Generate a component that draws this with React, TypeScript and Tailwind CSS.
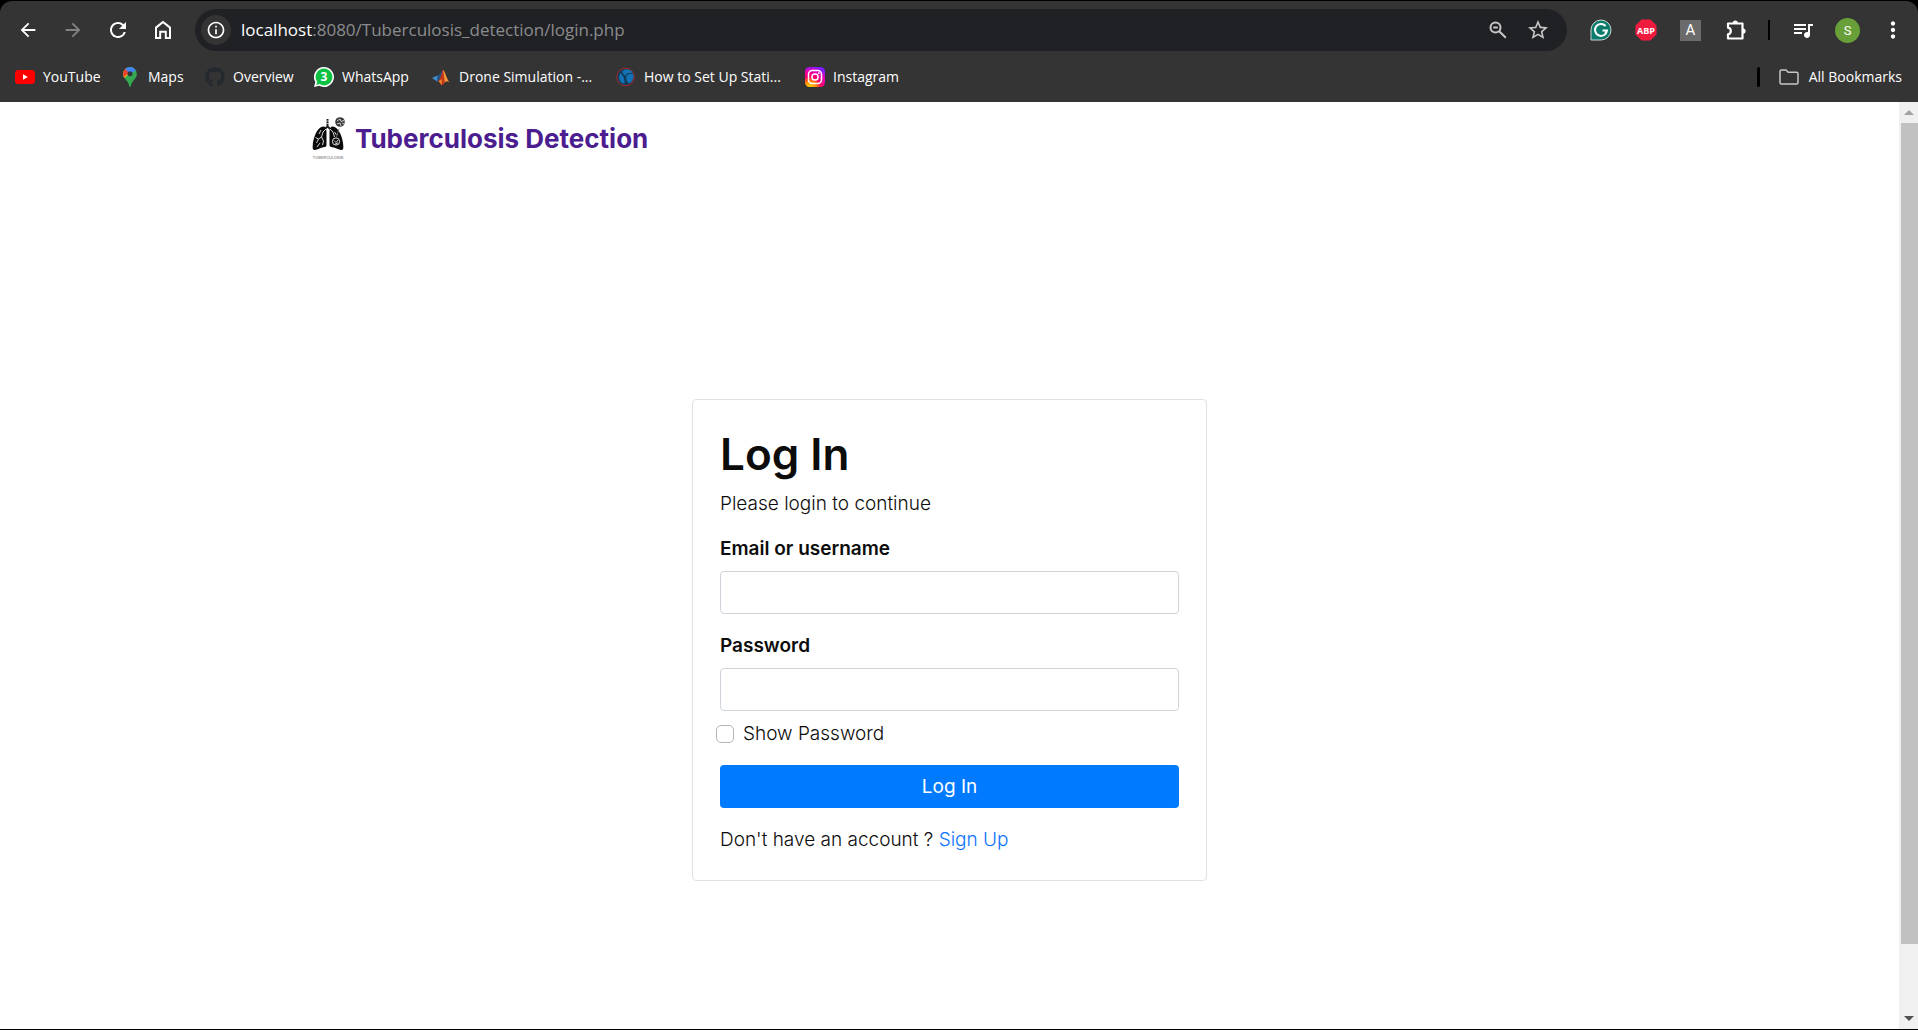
import type { ReactNode } from "react";
import { useState } from "react";
import {
  MdArrowBack,
  MdArrowForward,
  MdMoreVert,
  MdOutlineInfo,
  MdQueueMusic,
  MdRefresh,
  MdStarOutline,
} from "react-icons/md";
import { FaGithub } from "react-icons/fa";

function HomeIcon() {
  return (
    <svg viewBox="0 0 20 20" className="size-5" fill="none" stroke="currentColor" strokeWidth="2" aria-hidden="true">
      <path d="M3 18V7.6L10 2l7 5.600V18h-4.200v-6.200H7.200V18z" />
    </svg>
  );
}

function ZoomOutIcon() {
  return (
    <svg viewBox="0 0 20 20" className="size-5" fill="none" stroke="currentColor" strokeWidth="2" aria-hidden="true">
      <circle cx="7.500" cy="7.500" r="5" />
      <path d="M5.200 7.500h4.600M11.200 11.200l6.600 6.600" />
    </svg>
  );
}

function PuzzleIcon() {
  return (
    <svg viewBox="0 0 24 24" className="size-6" aria-hidden="true">
      <path
        d="M4 5.500h14.500v15H4v-4.200c1.700-.2 2.800-1.500 2.800-3.300S5.700 9.900 4 9.700z"
        fill="none"
        stroke="currentColor"
        strokeWidth="2.200"
        strokeLinejoin="round"
      />
      <path d="M8.700 5.200a2.600 2.600 0 0 1 5.200 0zM19 10.400a2.600 2.600 0 0 1 0 5.200z" fill="currentColor" />
    </svg>
  );
}

function GrammarlyIcon() {
  return (
    <svg viewBox="0 0 22 22" className="size-[22px]" aria-hidden="true">
      <path d="M1 21V11a10 10 0 1 1 10 10z" fill="#0b7b6b" stroke="#c9d6d3" strokeWidth="1" />
      <path d="M15.600 7A6 6 0 1 0 17 11.500h-4.500M16.900 11.500l-1.600 3.200" fill="none" stroke="#fff" strokeWidth="2" />
    </svg>
  );
}

function AdblockIcon() {
  return (
    <svg viewBox="0 0 22 22" className="size-[22px]" aria-hidden="true">
      <path d="M6.500.5h9l6 6v9l-6 6h-9l-6-6v-9z" fill="#f01c3f" />
      <text x="11" y="14.500" textAnchor="middle" fontSize="9" fontWeight="700" fill="#fff" fontFamily="Open Sans, sans-serif">
        ABP
      </text>
    </svg>
  );
}

function FolderIcon() {
  return (
    <svg viewBox="0 0 20 20" className="size-5 text-[#c7c7c7]" fill="none" stroke="currentColor" strokeWidth="1.500" strokeLinejoin="round" aria-hidden="true">
      <path d="M1 4.500q0-1.500 1.500-1.500H7l2.200 2.300h8.300q1.500 0 1.500 1.500v8.700q0 1.500-1.500 1.500h-15Q1 17 1 15.500z" />
    </svg>
  );
}

function YouTubeIcon() {
  return (
    <svg viewBox="0 0 20 20" className="size-5" aria-hidden="true">
      <rect y="3" width="20" height="14" rx="3.500" fill="#f00" />
      <path d="M8 7.200v5.600l4.800-2.800z" fill="#fff" />
    </svg>
  );
}

function MapsIcon() {
  return (
    <svg viewBox="0 0 20 20" className="size-5" aria-hidden="true">
      <clipPath id="pin">
        <path d="M10 0a6.800 6.800 0 0 0-6.800 6.900c0 2 .8 3.500 2 5 1.700 2 3.400 3.800 4 7 .2 1.400 1.400 1.400 1.600 0 .6-3.200 2.300-5 4-7 1.200-1.500 2-3 2-5A6.800 6.800 0 0 0 10 0z" />
      </clipPath>
      <g clipPath="url(#pin)">
        <rect width="20" height="20" fill="#34a853" />
        <path d="M0 15L10 6l4-5H0z" fill="#fbbc04" />
        <path d="M0 11l4-1 6-5-5-4H0z" fill="#ea4335" />
        <path d="M5 1.500L10 7l5.800-3.500L14 0H6z" fill="#4285f4" />
        <path d="M4 15l9.500-11L17 2v6L7 19z" fill="none" />
      </g>
      <circle cx="10" cy="6.800" r="2.500" fill="#343434" />
    </svg>
  );
}

function WhatsAppIcon() {
  return (
    <svg viewBox="0 0 20 20" className="size-5" aria-hidden="true">
      <path d="M10 0a10 10 0 1 1-4.800 18.800L0 20l1.300-5A10 10 0 0 1 10 0z" fill="#fff" />
      <path d="M10 1.600a8.400 8.400 0 1 1-4.500 15.500l-3.200.8.900-3A8.400 8.400 0 0 1 10 1.600z" fill="#0fc143" />
      <text x="10" y="14.300" textAnchor="middle" fontSize="12" fontWeight="700" fill="#fff" fontFamily="Open Sans, sans-serif">
        3
      </text>
    </svg>
  );
}

function MatlabIcon() {
  return (
    <svg viewBox="0 0 20 20" className="size-5" aria-hidden="true">
      <path d="M1 11l5.500-2.500 3 3.800L6 14.500z" fill="#3d8fd1" />
      <path d="M6.500 8.500C9 8 10 4 12 2.500L10.500 12 7.500 14 6 14.500z" fill="#26507f" />
      <path d="M12 2.500c2 1.500 3.500 9 6.500 13-2-1.800-3.500-1.500-5 .5-1 1.400-2 2-3 2.500-.8-2.200-2-3.600-3.500-4.200C9.500 12.500 10.500 6 12 2.500z" fill="#c1361b" />
      <path d="M12.200 2.800c1.800 2 3.300 9 6.300 12.700-2-1.800-3.300-1.600-4.700 0C13.500 11 12.500 7 12.200 2.800z" fill="#f39a3c" />
      <path d="M10.500 12c.6 2 .5 4.500 0 6.500-.8-2.200-2-3.600-3.500-4.200 1.500-.4 2.600-1.200 3.500-2.300z" fill="#e8842c" />
    </svg>
  );
}

function GlobeIcon() {
  return (
    <svg viewBox="0 0 20 20" className="size-5" aria-hidden="true">
      <circle cx="9.500" cy="10" r="8.700" fill="#123a52" stroke="#b3262b" strokeWidth="1" />
      <path d="M6 4.500C9 1.500 14.500 2 17 5.500c-1.500 0-2.500 1-4 .8-2-.4-3.200.8-3.700 3C8.500 8 7 6.500 6 4.500z" fill="#1272b5" />
      <path d="M10.500 9c1-2 4-2.500 7-1.500.5 3.500-1 7-4 8.800-2.500-1-4-4-3-7.300z" fill="#1272b5" />
      <path d="M4.500 6C7 8 8.500 11 8.600 16.800 3.500 16 1.500 10.500 4.500 6z" fill="#1272b5" />
    </svg>
  );
}

function InstagramIcon() {
  return (
    <svg viewBox="0 0 20 20" className="size-5" aria-hidden="true">
      <defs>
        <radialGradient id="warm" cx="25%" cy="105%" r="110%">
          <stop offset="0" stopColor="#ffdd00" />
          <stop offset=".3" stopColor="#ff8a00" />
          <stop offset=".5" stopColor="#ff0069" />
          <stop offset=".8" stopColor="#e600b8" />
          <stop offset="1" stopColor="#7a1cff" />
        </radialGradient>
      </defs>
      <rect width="20" height="20" rx="4.500" fill="url(#warm)" />
      <rect x="3.500" y="3.500" width="13" height="13" rx="3.800" fill="none" stroke="#fff" strokeWidth="1.500" />
      <circle cx="10" cy="10" r="3.100" fill="none" stroke="#fff" strokeWidth="1.500" />
      <circle cx="13.800" cy="6.200" r=".9" fill="#fff" />
    </svg>
  );
}

function LungsLogo() {
  return (
    <svg viewBox="0 0 41 45" className="h-[45px] w-[41px]" aria-hidden="true">
      <path d="M19.500 3v8M19.500 10.500l-4 3.500M19.500 10.500l4 3.500" stroke="#222" strokeWidth="2" fill="none" />
      <path d="M17.500 5h4M17.500 7.500h4" stroke="#fff" strokeWidth=".6" />
      <path d="M15.500 10.500c2 0 3 2.500 3 6V29c0 2-1.500 2-3 2.200-3 .5-5 2-8.300 2.800-2.200.4-2.700-1-2.500-4 .4-8 4.500-19.500 10.800-19.500z" fill="#0b0b0b" />
      <path d="M24.500 10.500c-2 0-3 2.500-3 6V29c0 2 1.500 2 3 2.200 3 .5 5 2 8.300 2.800 2.200.4 2.700-1 2.500-4-.4-8-4.500-19.500-10.800-19.500z" fill="#0b0b0b" />
      <path d="M18 13l-3 3-1.500 5-3 2-2 4M13.500 21l2 4-1 4M10.500 23l-3-1.500M12 27l-3 4M11 18l2-4M22 13l3 3 1.500 5M26.500 16l2 3" stroke="#e8e8e8" strokeWidth=".9" fill="none" />
      <circle cx="28" cy="25.500" r="3.600" fill="none" stroke="#ddd" strokeWidth="1" />
      <path d="M26 24.500l2 2 2-2.500M27 28l3-1" stroke="#ddd" strokeWidth=".9" fill="none" />
      <path d="M28.500 21.500l2.500-9" stroke="#888" strokeWidth=".8" />
      <circle cx="32" cy="6" r="4.800" fill="#3a3a3a" />
      <path d="M29 5l3-2 1 2.500 3-1M29 8l3-1 1 3M34 7l2 1" stroke="#ddd" strokeWidth=".9" fill="none" />
      <text x="20" y="42.500" textAnchor="middle" fontSize="4" fill="#a3a3a3" fontFamily="Inter, sans-serif">
        TUBERCULOSIS
      </text>
    </svg>
  );
}

function ToolButton({ label, children, className = "" }: { label: string; children: ReactNode; className?: string }) {
  return (
    <button type="button" aria-label={label} className={`flex h-[42px] w-[45px] items-center justify-center ${className}`}>
      {children}
    </button>
  );
}

const bookmarks = [
  { label: "YouTube", icon: <YouTubeIcon />, width: "w-[105px]" },
  { label: "Maps", icon: <MapsIcon />, width: "w-[85px]" },
  { label: "Overview", icon: <FaGithub className="size-5 text-[#24292f]" />, width: "w-[109px]" },
  { label: "WhatsApp", icon: <WhatsAppIcon />, width: "w-[117px]" },
  { label: "Drone Simulation -...", icon: <MatlabIcon />, width: "w-[185px]" },
  { label: "How to Set Up Stati...", icon: <GlobeIcon />, width: "w-[189px]" },
  { label: "Instagram", icon: <InstagramIcon />, width: "w-[115px]" },
];

function BrowserChrome() {
  return (
    <header className="rounded-t-xl bg-[#343434] pt-2 font-['Open_Sans',sans-serif] text-white">
      <div className="flex items-center pr-[3px] pl-[5px]">
        <ToolButton label="Back">
          <MdArrowBack className="size-[22px]" />
        </ToolButton>
        <ToolButton label="Forward" className="text-[#838383]">
          <MdArrowForward className="size-[22px]" />
        </ToolButton>
        <ToolButton label="Reload">
          <MdRefresh className="size-6" />
        </ToolButton>
        <ToolButton label="Home">
          <HomeIcon />
        </ToolButton>
        <div className="ml-[10px] flex h-[42px] flex-1 items-center rounded-full bg-[#202124] pr-[9px] pl-[6px]">
          <button type="button" aria-label="View site information" className="flex size-[30px] items-center justify-center rounded-full bg-[#343434]">
            <MdOutlineInfo className="size-5" />
          </button>
          <p className="ml-[10px] flex-1 text-[17px] text-[#8b8c8e]">
            <span className="text-white">localhost</span>:8080/Tuberculosis_detection/login.php
          </p>
          <button type="button" aria-label="Zoom" className="flex size-10 items-center justify-center text-[#c7c7c7]">
            <ZoomOutIcon />
          </button>
          <button type="button" aria-label="Bookmark this tab" className="flex size-10 items-center justify-center text-[#c7c7c7]">
            <MdStarOutline className="size-6" />
          </button>
        </div>
        <div className="ml-[11px] flex items-center">
          <ToolButton label="Grammarly">
            <GrammarlyIcon />
          </ToolButton>
          <ToolButton label="Adblock Plus">
            <AdblockIcon />
          </ToolButton>
          <ToolButton label="Extension A">
            <span className="flex size-[21px] items-center justify-center bg-[#6b6b6b] font-['Roboto',sans-serif] text-[15px] leading-none">
              A
            </span>
          </ToolButton>
          <ToolButton label="Extensions">
            <PuzzleIcon />
          </ToolButton>
          <span className="mx-[10px] h-5 w-[2px] bg-black" />
          <ToolButton label="Media controls">
            <MdQueueMusic className="size-6" />
          </ToolButton>
          <ToolButton label="Profile">
            <span className="flex size-[25px] items-center justify-center rounded-full bg-[#689f38] font-['Roboto',sans-serif] text-[13px] leading-none">
              S
            </span>
          </ToolButton>
          <ToolButton label="Menu">
            <MdMoreVert className="size-[26px]" />
          </ToolButton>
        </div>
      </div>
      <nav aria-label="Bookmarks" className="flex h-[51px] items-center pr-4 pl-[15px] text-sm">
        {bookmarks.map((bookmark) => (
          <a key={bookmark.label} href="#" className={`flex shrink-0 items-center gap-2 whitespace-nowrap ${bookmark.width}`}>
            {bookmark.icon}
            {bookmark.label}
          </a>
        ))}
        <span className="ml-auto h-5 w-[3px] rounded-full bg-black" />
        <button type="button" className="ml-[19px] flex items-center gap-[10px]">
          <FolderIcon />
          All Bookmarks
        </button>
      </nav>
    </header>
  );
}

function Scrollbar() {
  return (
    <div className="flex w-[19px] shrink-0 flex-col bg-[#f0f0f0]">
      <button type="button" aria-label="Scroll up" className="flex h-[21px] items-center justify-center">
        <svg viewBox="0 0 10 5" className="h-[5px] w-[10px]" aria-hidden="true">
          <path d="M0 5L5 0l5 5z" fill="#a3a3a3" />
        </svg>
      </button>
      <div className="ml-[2px] flex-[821] bg-[#c1c1c1]" />
      <div className="flex-[64]" />
      <button type="button" aria-label="Scroll down" className="flex h-[21px] items-center justify-center">
        <svg viewBox="0 0 10 5" className="h-[5px] w-[10px]" aria-hidden="true">
          <path d="M0 0l5 5 5-5z" fill="#505050" />
        </svg>
      </button>
    </div>
  );
}

const field =
  "mt-[9px] block h-[43px] w-full rounded-[4px] border border-[#ced4da] bg-white px-[13px] outline-none focus:border-[#80bdff]";

function LoginForm() {
  const [visible, setVisible] = useState(false);
  return (
    <form
      className="w-full max-w-[515px] rounded-[4px] border border-[#dee2e6] p-[27px] text-[19px] leading-[27px] font-light"
      onSubmit={(event) => event.preventDefault()}
    >
      <h1 className="text-[44px] leading-[54px] font-semibold">Log In</h1>
      <p className="mt-[9px]">Please login to continue</p>
      <label htmlFor="user" className="mt-[18px] block font-semibold">
        Email or username
      </label>
      <input id="user" type="text" className={field} />
      <label htmlFor="password" className="mt-[18px] block font-semibold">
        Password
      </label>
      <input id="password" type={visible ? "text" : "password"} className={field} />
      <div className="mt-[9px] -ml-1 flex items-center gap-[9px]">
        <input
          id="show"
          type="checkbox"
          checked={visible}
          onChange={(event) => setVisible(event.target.checked)}
          className="size-[18px] appearance-none rounded-[5px] border border-[#b5b5b5] bg-white checked:border-[#007bff] checked:bg-[#007bff]"
        />
        <label htmlFor="show">Show Password</label>
      </div>
      <button type="submit" className="mt-[18px] h-[43px] w-full rounded-[4px] bg-[#007bff] font-normal text-white">
        Log In
      </button>
      <p className="mt-[18px]">
        Don't have an account ?{" "}
        <a href="#signup" className="text-[#0d74ff]">
          Sign Up
        </a>
      </p>
    </form>
  );
}

export default function App() {
  return (
    <div className="flex h-screen flex-col bg-black py-px">
      <BrowserChrome />
      <div className="flex min-h-0 flex-1 bg-white">
        <div className="min-w-0 flex-1 overflow-hidden font-['Inter',sans-serif] text-[#0c0c0c]">
          <header className="mx-auto flex h-[73px] max-w-[1283px] items-center">
            <a href="#home" className="flex items-center gap-[6px] text-[26px] leading-9 font-bold text-[#4b1d8f]">
              <LungsLogo />
              Tuberculosis Detection
            </a>
          </header>
          <main className="flex justify-center px-4 pt-[224px]">
            <LoginForm />
          </main>
        </div>
        <Scrollbar />
      </div>
    </div>
  );
}
